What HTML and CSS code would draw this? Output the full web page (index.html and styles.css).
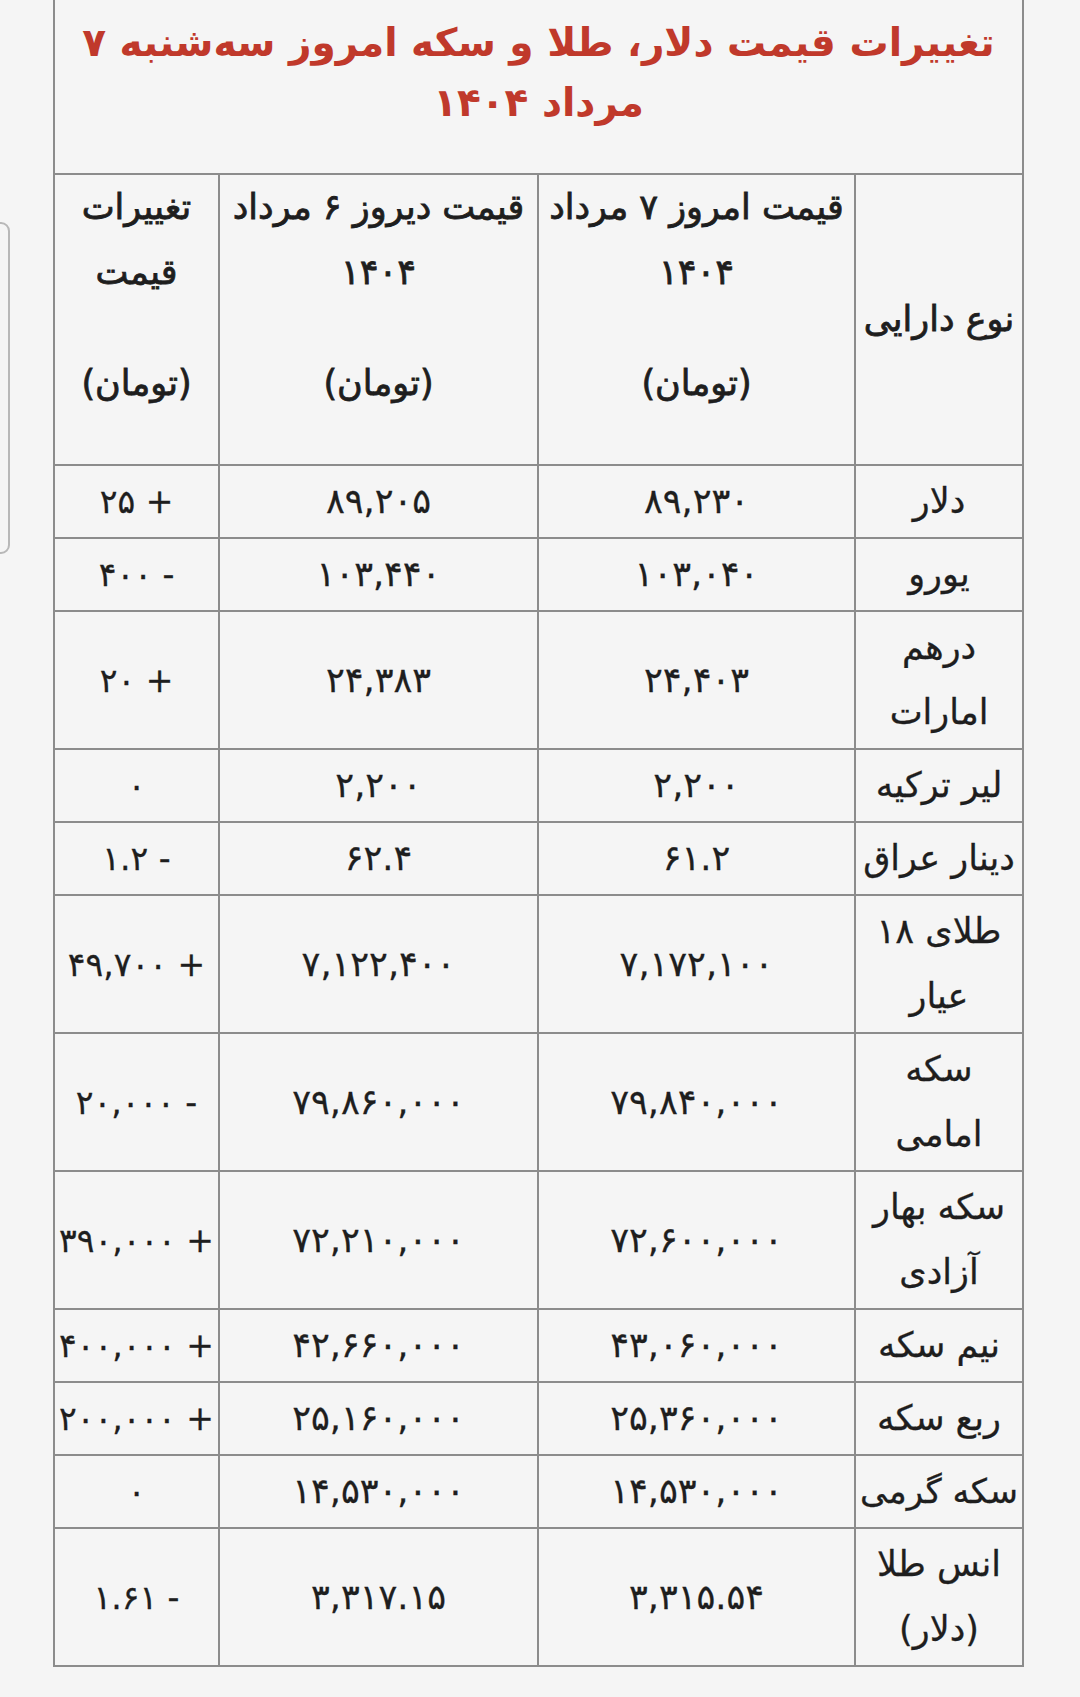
FILE: index.html
```html
<!DOCTYPE html>
<html lang="fa" dir="rtl">
<head>
<meta charset="utf-8">
<title>تغییرات قیمت دلار، طلا و سکه</title>
<link rel="stylesheet" href="styles.css">
</head>
<body>
<div class="side-widget"></div>
<main class="page">
<table class="prices">
  <colgroup>
    <col class="c-name">
    <col class="c-today">
    <col class="c-yest">
    <col class="c-diff">
  </colgroup>
  <thead>
    <tr>
      <th class="title" colspan="4">تغییرات قیمت دلار، طلا و سکه امروز سه‌شنبه ۷<br>مرداد ۱۴۰۴</th>
    </tr>
    <tr class="head">
      <th>نوع دارایی</th>
      <th><div class="h-main">قیمت امروز ۷ مرداد<br>۱۴۰۴</div><div class="h-unit">(تومان)</div></th>
      <th><div class="h-main">قیمت دیروز ۶ مرداد<br>۱۴۰۴</div><div class="h-unit">(تومان)</div></th>
      <th><div class="h-main">تغییرات<br>قیمت</div><div class="h-unit">(تومان)</div></th>
    </tr>
  </thead>
  <tbody>
    <tr><td>دلار</td><td>۸۹,۲۳۰</td><td>۸۹,۲۰۵</td><td class="diff">+ ۲۵</td></tr>
    <tr><td>یورو</td><td>۱۰۳,۰۴۰</td><td>۱۰۳,۴۴۰</td><td class="diff">- ۴۰۰</td></tr>
    <tr><td>درهم<br>امارات</td><td>۲۴,۴۰۳</td><td>۲۴,۳۸۳</td><td class="diff">+ ۲۰</td></tr>
    <tr><td>لیر ترکیه</td><td>۲,۲۰۰</td><td>۲,۲۰۰</td><td class="diff">۰</td></tr>
    <tr><td>دینار عراق</td><td>۶۱.۲</td><td>۶۲.۴</td><td class="diff">- ۱.۲</td></tr>
    <tr><td>طلای ۱۸<br>عیار</td><td>۷,۱۷۲,۱۰۰</td><td>۷,۱۲۲,۴۰۰</td><td class="diff">+ ۴۹,۷۰۰</td></tr>
    <tr><td>سکه<br>امامی</td><td>۷۹,۸۴۰,۰۰۰</td><td>۷۹,۸۶۰,۰۰۰</td><td class="diff">- ۲۰,۰۰۰</td></tr>
    <tr><td>سکه بهار<br>آزادی</td><td>۷۲,۶۰۰,۰۰۰</td><td>۷۲,۲۱۰,۰۰۰</td><td class="diff">+ ۳۹۰,۰۰۰</td></tr>
    <tr><td>نیم سکه</td><td>۴۳,۰۶۰,۰۰۰</td><td>۴۲,۶۶۰,۰۰۰</td><td class="diff">+ ۴۰۰,۰۰۰</td></tr>
    <tr><td>ربع سکه</td><td>۲۵,۳۶۰,۰۰۰</td><td>۲۵,۱۶۰,۰۰۰</td><td class="diff">+ ۲۰۰,۰۰۰</td></tr>
    <tr><td class="tight">سکه گرمی</td><td>۱۴,۵۳۰,۰۰۰</td><td>۱۴,۵۳۰,۰۰۰</td><td class="diff">۰</td></tr>
    <tr><td>انس طلا<br>(دلار)</td><td>۳,۳۱۵.۵۴</td><td>۳,۳۱۷.۱۵</td><td class="diff">- ۱.۶۱</td></tr>
  </tbody>
</table>
</main>
</body>
</html>
```
FILE: styles.css
```css
html, body {
  margin: 0;
  padding: 0;
  background: #f5f5f5;
}
body {
  font-family: "DejaVu Sans", "Noto Sans", sans-serif;
  color: #1e1e1e;
  position: relative;
  min-height: 1697px;
}
.side-widget {
  position: absolute;
  left: -20px;
  top: 222px;
  width: 26px;
  height: 328px;
  border: 2px solid #b8b8b8;
  border-radius: 9px;
}
.page {
  padding: 0 56px 0 56px;
}
.prices {
  width: 969px;
  border-collapse: collapse;
  table-layout: fixed;
  font-size: 35px;
  line-height: 65px;
}
.c-name { width: 168px; }
.c-today { width: 317px; }
.c-yest { width: 319px; }
.c-diff { width: 165px; }
.prices th,
.prices td {
  border: 2px solid #8c8c8c;
  text-align: center;
  vertical-align: middle;
  padding: 3px 0;
  font-weight: normal;
  white-space: nowrap;
}
.prices td {
  -webkit-text-stroke: 0.3px #1e1e1e;
}
.prices td.diff {
  font-size: 33px;
}
.prices td.tight {
  font-size: 34px;
}
.prices th.title {
  border-top: 0;
  color: #c0392b;
  font-weight: bold;
  font-size: 39px;
  line-height: 60px;
  padding: 13px 0 40px 0;
}
.head th {
  padding: 0;
  -webkit-text-stroke: 0.8px #1e1e1e;
}
.h-unit {
  margin-top: 46px;
  margin-bottom: 48px;
}
```
